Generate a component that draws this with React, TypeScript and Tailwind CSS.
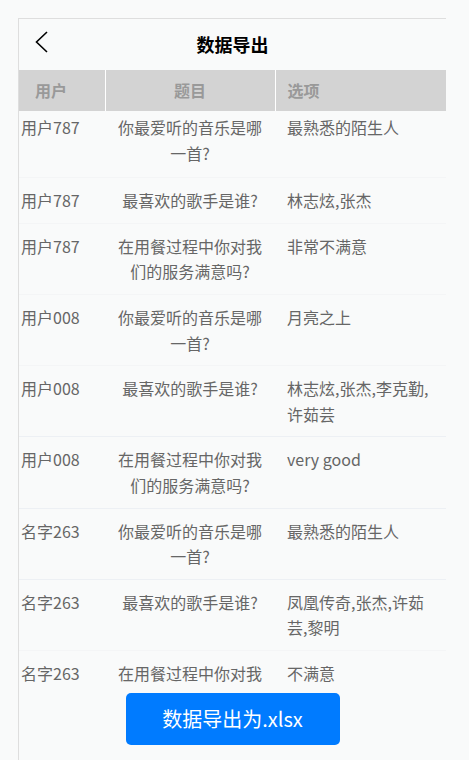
import React from "react"

const rows = [
  { user: "用户787", q: "你最爱听的音乐是哪一首?", a: "最熟悉的陌生人" },
  { user: "用户787", q: "最喜欢的歌手是谁?", a: "林志炫,张杰" },
  { user: "用户787", q: "在用餐过程中你对我们的服务满意吗?", a: "非常不满意" },
  { user: "用户008", q: "你最爱听的音乐是哪一首?", a: "月亮之上" },
  { user: "用户008", q: "最喜欢的歌手是谁?", a: "林志炫,张杰,李克勤,许茹芸" },
  { user: "用户008", q: "在用餐过程中你对我们的服务满意吗?", a: "very good" },
  { user: "名字263", q: "你最爱听的音乐是哪一首?", a: "最熟悉的陌生人" },
  { user: "名字263", q: "最喜欢的歌手是谁?", a: "凤凰传奇,张杰,许茹芸,黎明" },
  { user: "名字263", q: "在用餐过程中你对我们的服务满意吗?", a: "不满意" },
]

export default function App() {
  return (
    <div className="h-screen bg-[#f9fafa] pt-[18px] pl-[18px] font-['Noto_Sans_CJK_SC',sans-serif]">
      <div className="flex h-full w-[428px] flex-col border-t border-l border-[#dedede]">
        {/* top bar */}
        <div className="relative flex h-[51px] shrink-0 items-center justify-center">
          <button className="absolute left-[16px] top-[12px] text-black">
            <svg width="14" height="22" viewBox="0 0 14 22" fill="none">
              <polyline points="12,1 1.5,11 12,21" stroke="currentColor" strokeWidth="1.6" />
            </svg>
          </button>
          <h1 className="text-[18px] font-bold text-black">数据导出</h1>
        </div>

        {/* table list */}
        <div className="min-h-0 flex-1 overflow-hidden">
          <table className="w-full table-fixed border-collapse text-[16px] leading-[25.6px] text-[#666]">
            <colgroup>
              <col className="w-[86px]" />
              <col className="w-[170px]" />
              <col />
            </colgroup>
            <thead>
              <tr className="h-[41px] bg-[#d3d3d3] text-[#999]">
                <th className="border-r border-white pl-[16px] text-left font-bold">用户</th>
                <th className="border-r border-white text-center font-bold">题目</th>
                <th className="pl-3 text-left font-bold">选项</th>
              </tr>
            </thead>
            <tbody>
              {rows.map((r, i) => {
                const pad = i === 0 ? "pt-[4px] pb-[11px]" : "pt-[10px] pb-[9px]"
                return (
                  <tr
                    key={i}
                    className={`align-top border-b ${i >= 4 && i <= 6 ? "border-[#edf0f4]" : "border-[#f4f5f6]"}`}
                  >
                    <td className={`pl-[2px] ${pad}`}>{r.user}</td>
                    <td className={`px-3 text-center ${pad}`}>{r.q}</td>
                    <td className={`px-3 ${pad}`}>{r.a}</td>
                  </tr>
                )
              })}
            </tbody>
          </table>
        </div>

        {/* export button */}
        <div className="flex h-[71px] shrink-0 justify-center pt-[4px]">
          <button className="h-[52px] w-[214px] rounded-[5px] bg-[#007bff] text-[20px] text-white">
            数据导出为.xlsx
          </button>
        </div>
      </div>
    </div>
  )
}
